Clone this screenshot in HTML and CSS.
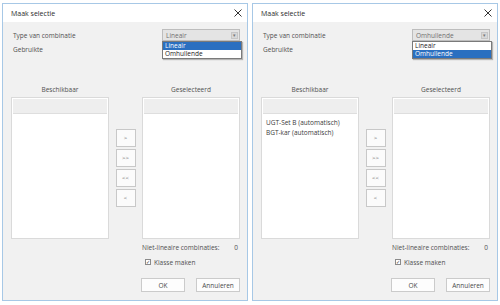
FILE: index.html
```html
<!DOCTYPE html>
<html lang="nl">
<head>
    <meta charset="UTF-8">
    <title>Maak selectie</title>
    <link rel="stylesheet" href="styles.css">
</head>
<body>
    <div class="screen">
        <!-- dialoog 1: Lineair open -->
        <div class="dialog">
            <div class="titlebar">
                <span class="title">Maak selectie</span>
                <svg class="close" width="8" height="8" viewBox="0 0 8 8"><path d="M0.5 0.5 L7.5 7.5 M7.5 0.5 L0.5 7.5" stroke="#333" stroke-width="1"/></svg>
            </div>
            <div class="content">
                <div class="type-row">
                    <span>Type van combinatie</span>
                    <div class="combo">
                        <span class="combo-value">Lineair</span>
                        <span class="combo-arrow">&#9662;</span>
                        <ul class="dropdown">
                            <li class="selected">Lineair</li>
                            <li>Omhullende</li>
                        </ul>
                    </div>
                </div>
                <div class="used">Gebruikte</div>
                <div class="picker">
                    <div class="col">
                        <div class="col-label">Beschikbaar</div>
                        <div class="listbox">
                            <div class="list-head"></div>
                            <div class="list-body"></div>
                        </div>
                    </div>
                    <div class="movers">
                        <button>&gt;</button>
                        <button>&gt;&gt;</button>
                        <button>&lt;&lt;</button>
                        <button>&lt;</button>
                    </div>
                    <div class="col">
                        <div class="col-label">Geselecteerd</div>
                        <div class="listbox">
                            <div class="list-head"></div>
                            <div class="list-body"></div>
                        </div>
                    </div>
                </div>
                <div class="bottom">
                    <div class="summary"><span>Niet-lineaire combinaties:</span><span>0</span></div>
                    <label class="check"><span class="box">&#10003;</span>Klasse maken</label>
                    <div class="actions">
                        <button>OK</button>
                        <button>Annuleren</button>
                    </div>
                </div>
            </div>
        </div>

        <!-- dialoog 2: Omhullende gekozen -->
        <div class="dialog">
            <div class="titlebar">
                <span class="title">Maak selectie</span>
                <svg class="close" width="8" height="8" viewBox="0 0 8 8"><path d="M0.5 0.5 L7.5 7.5 M7.5 0.5 L0.5 7.5" stroke="#333" stroke-width="1"/></svg>
            </div>
            <div class="content">
                <div class="type-row">
                    <span>Type van combinatie</span>
                    <div class="combo">
                        <span class="combo-value">Omhullende</span>
                        <span class="combo-arrow">&#9662;</span>
                        <ul class="dropdown">
                            <li>Lineair</li>
                            <li class="selected">Omhullende</li>
                        </ul>
                    </div>
                </div>
                <div class="used">Gebruikte</div>
                <div class="picker">
                    <div class="col">
                        <div class="col-label">Beschikbaar</div>
                        <div class="listbox">
                            <div class="list-head"></div>
                            <div class="list-body">
                                <div class="item">UGT-Set B (automatisch)</div>
                                <div class="item">BGT-kar (automatisch)</div>
                            </div>
                        </div>
                    </div>
                    <div class="movers">
                        <button>&gt;</button>
                        <button>&gt;&gt;</button>
                        <button>&lt;&lt;</button>
                        <button>&lt;</button>
                    </div>
                    <div class="col">
                        <div class="col-label">Geselecteerd</div>
                        <div class="listbox">
                            <div class="list-head"></div>
                            <div class="list-body"></div>
                        </div>
                    </div>
                </div>
                <div class="bottom">
                    <div class="summary"><span>Niet-lineaire combinaties:</span><span>0</span></div>
                    <label class="check"><span class="box">&#10003;</span>Klasse maken</label>
                    <div class="actions">
                        <button>OK</button>
                        <button>Annuleren</button>
                    </div>
                </div>
            </div>
        </div>
    </div>
</body>
</html>
```

FILE: styles.css
```css
* {
    margin: 0;
    padding: 0;
    box-sizing: border-box;
}

body {
    font-family: 'Open Sans', 'Noto Sans', sans-serif;
    font-size: 6.5px;
    color: #505050;
    background-color: #fff;
    width: 500px;
    height: 305px;
    overflow: hidden;
}

.screen {
    display: flex;
    gap: 4px;
    padding: 3px 0 0 2px;
}

.dialog {
    width: 246px;
    height: 298px;
    border: 1px solid #a7c8e6;
    background-color: #f1f1f1;
    display: flex;
    flex-direction: column;
}

.titlebar {
    height: 18px;
    background-color: #fff;
    display: flex;
    align-items: center;
    justify-content: space-between;
    padding: 0 5px 0 8px;
}

.title {
    font-size: 7px;
    color: #2a2a2a;
}

.content {
    padding: 7px 7px 0 8px;
    flex: 1;
    display: flex;
    flex-direction: column;
}

.type-row {
    display: flex;
    align-items: center;
    justify-content: space-between;
    height: 12px;
    padding-left: 2px;
}

.combo {
    position: relative;
    width: 78px;
    height: 12px;
    background-color: #e4e4e4;
    border: 1px solid #bdbdbd;
    display: flex;
    align-items: center;
    justify-content: space-between;
    padding: 0 1px 0 3px;
    color: #707070;
}

.combo-arrow {
    width: 7px;
    height: 7px;
    background-color: #d8d8d8;
    border: 1px solid #c6c6c6;
    font-size: 5px;
    line-height: 5px;
    text-align: center;
    color: #777;
}

.dropdown {
    position: absolute;
    top: 11px;
    left: -1px;
    width: 80px;
    list-style: none;
    background-color: #fff;
    border: 1px solid #7a7a7a;
    box-shadow: 1px 1px 1px rgba(0, 0, 0, 0.25);
    color: #222;
}

.dropdown li {
    height: 8px;
    line-height: 8px;
    padding-left: 2px;
}

.dropdown li.selected {
    background-color: #2a6fc0;
    color: #fff;
}

.used {
    margin-top: 4px;
    height: 10px;
    line-height: 10px;
    padding-left: 2px;
}

.picker {
    margin-top: 30px;
    display: grid;
    grid-template-columns: 98px 33px 98px;
}

.col-label {
    height: 10px;
    line-height: 10px;
    text-align: center;
    margin-bottom: 2px;
}

.listbox {
    height: 142px;
    border: 1px solid #dadada;
    background-color: #fff;
    display: flex;
    flex-direction: column;
}

.list-head {
    height: 15px;
    background-color: #eeeeee;
    border-bottom: 1px solid #dedede;
    margin: 1px;
}

.list-body {
    flex: 1;
    padding: 3px 4px;
}

.item {
    height: 10px;
    line-height: 10px;
    color: #3a3a3a;
}

.movers {
    display: flex;
    flex-direction: column;
    align-items: center;
    justify-content: center;
    gap: 2px;
    padding-top: 12px;
}

.movers button {
    flex: none;
    width: 20px;
    height: 18px;
    background-color: #fbfbfb;
    border: 1px solid #c8c8c8;
    font-family: inherit;
    font-size: 6px;
    color: #666;
}

.bottom {
    margin-left: 131px;
    width: 98px;
}

.summary {
    margin-top: 4px;
    height: 10px;
    line-height: 10px;
    display: flex;
    justify-content: space-between;
    padding-right: 2px;
}

.check {
    margin-top: 4px;
    height: 10px;
    display: flex;
    align-items: center;
    gap: 3px;
    padding-left: 3px;
}

.box {
    width: 6px;
    height: 6px;
    border: 1px solid #8a8a8a;
    background-color: #fff;
    font-size: 5px;
    line-height: 4px;
    text-align: center;
    color: #333;
}

.actions {
    margin-top: 11px;
    display: flex;
    justify-content: space-between;
    margin-left: -1px;
}

.actions button {
    width: 44px;
    height: 14px;
    background-color: #fdfdfd;
    border: 1px solid #cbcbcb;
    font-family: inherit;
    font-size: 6.5px;
    color: #4a4a4a;
}
```
